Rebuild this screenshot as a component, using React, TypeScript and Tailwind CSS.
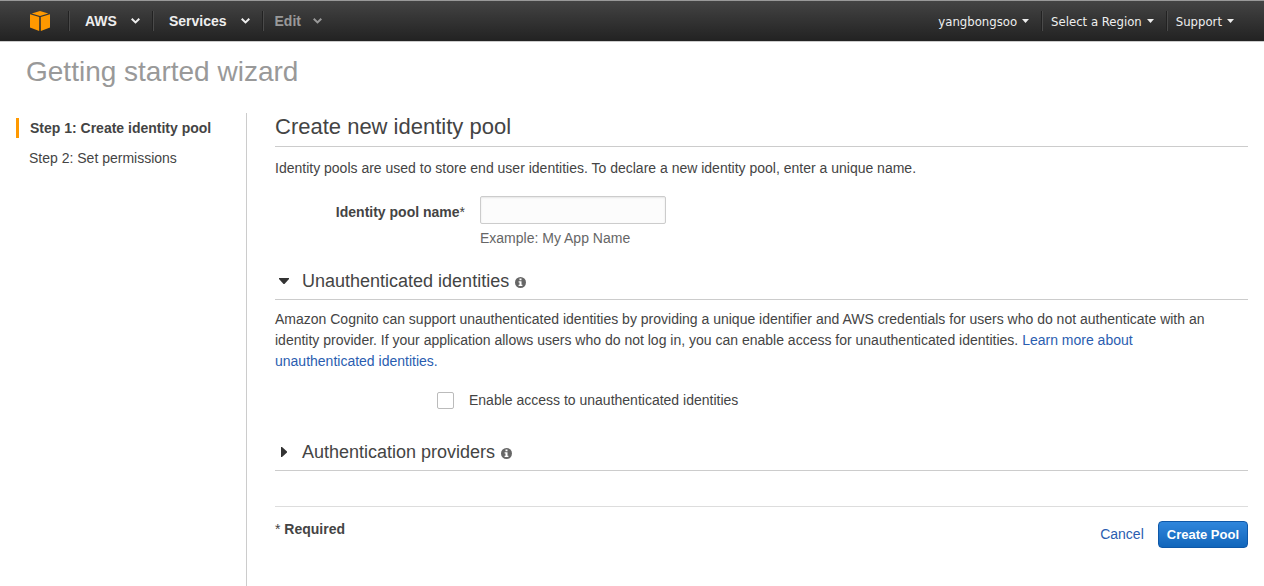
import { useState, type ReactNode } from 'react';

function Cube() {
  return (
    <svg viewBox="0 0 20 20" className="h-5 w-5" fill="#ff9900" aria-hidden="true">
      <path d="M10 0 18.3 2.4 10 5 1.7 2.4Z" />
      <path d="M0 3.3 9.2 5.9V20L0 16.6Z" />
      <path d="M20 3.3 10.8 5.9V20L20 16.6Z" />
    </svg>
  );
}

function Chevron() {
  return (
    <svg viewBox="0 0 9 6" className="h-1.5 w-[9px]" fill="none" stroke="currentColor" strokeWidth="2" aria-hidden="true">
      <path d="M0.7 0.8 4.5 4.4 8.3 0.8" />
    </svg>
  );
}

function Caret() {
  return (
    <svg viewBox="0 0 7 4" className="h-1 w-[7px]" fill="currentColor" aria-hidden="true">
      <path d="M0 0H7L3.5 4Z" />
    </svg>
  );
}

function InfoIcon() {
  return (
    <svg viewBox="0 0 11 11" className="mt-0.5 h-[11px] w-[11px]" aria-hidden="true">
      <circle cx="5.5" cy="5.5" r="5.5" fill="#666" />
      <path d="M4.5 1.5H6.5V3.2H4.5ZM3.6 4.2H6.5V7.8H7.4V9H3.6V7.8H4.5V5.4H3.6Z" fill="#fff" />
    </svg>
  );
}

function Divider() {
  return <span className="h-5 w-0.5 border-l border-l-[#222] border-r border-r-[#4a4a4a]" />;
}

function Section({ title, defaultOpen = false, children }: { title: string; defaultOpen?: boolean; children?: ReactNode }) {
  const [open, setOpen] = useState(defaultOpen);
  return (
    <section>
      <h3 className="border-b border-[#ccc] pb-1.5 text-lg leading-6">
        <button type="button" aria-expanded={open} onClick={() => setOpen(!open)} className="flex items-center">
          <span className="flex w-[27px] pl-1">
            <svg viewBox="0 0 10 10" className="h-2.5 w-2.5" fill="#333" aria-hidden="true">
              <path d={open ? 'M0 2H10V3L5.5 8H4.5L0 3Z' : 'M2 0H3L8 4.5V5.5L3 10H2Z'} />
            </svg>
          </span>
          <span className="pr-1.5">{title}</span>
          <InfoIcon />
        </button>
      </h3>
      {open && children}
    </section>
  );
}

export default function App() {
  return (
    <div className="flex min-h-screen flex-col bg-white font-['Liberation_Sans',Arial,sans-serif] text-sm leading-[21px] text-[#444]">
      <header className="flex h-[42px] items-center justify-between border-t border-b border-t-[#999] border-b-[#ccc] bg-linear-to-b from-[#444] to-[#222] px-[30px] text-[#eee] [text-shadow:0_1px_0_#000]">
        <nav className="flex items-center text-sm font-bold">
          <a href="#home" aria-label="Home" className="pr-[18px]"><Cube /></a>
          <Divider />
          <button type="button" className="flex items-center gap-3.5 pr-3 pl-[15px]">AWS <Chevron /></button>
          <Divider />
          <button type="button" className="flex items-center gap-3.5 pr-3 pl-[15px]">Services <Chevron /></button>
          <Divider />
          <button type="button" className="flex items-center gap-3 pl-[11px] text-[#999]">Edit <Chevron /></button>
        </nav>
        <nav className="flex items-center font-['DejaVu_Sans_Condensed',Tahoma,sans-serif] text-[13px]">
          <button type="button" className="flex items-center gap-[5px] pr-3">yangbongsoo <Caret /></button>
          <Divider />
          <button type="button" className="flex items-center gap-[5px] pr-3 pl-2">Select a Region <Caret /></button>
          <Divider />
          <button type="button" className="flex items-center gap-[5px] pl-2">Support <Caret /></button>
        </nav>
      </header>

      <h1 className="px-[26px] pt-3 pb-[23px] text-[28px] leading-9 text-[#999]">Getting started wizard</h1>

      <div className="flex flex-1 px-4">
        <aside className="w-[230px] shrink-0 pt-[5px]">
          <ol className="flex flex-col gap-2.5 leading-5">
            <li aria-current="step" className="border-l-[3px] border-[#ff9900] pl-[11px] font-bold">Step 1: Create identity pool</li>
            <li className="pl-[13px]">Step 2: Set permissions</li>
          </ol>
        </aside>

        <main className="min-w-0 flex-1 border-l border-[#ccc] pl-7">
          <h2 className="border-b border-[#ccc] pb-[5px] text-[22px] leading-7">Create new identity pool</h2>
          <p className="pt-[11px]">Identity pools are used to store end user identities. To declare a new identity pool, enter a unique name.</p>

          <form onSubmit={(e) => e.preventDefault()}>
            <div className="flex pt-[17px]">
              <label htmlFor="pool-name" className="w-[190px] pt-1.5 text-right font-bold">
                Identity pool name<span className="font-normal">*</span>
              </label>
              <div className="pl-[15px]">
                <input id="pool-name" type="text" className="block h-7 w-[186px] rounded-xs border border-[#ccc] bg-[#fcfcfc] px-2 shadow-[inset_0_1px_2px_#e5e5e5]" />
                <p className="pt-1 text-[#666]">Example: My App Name</p>
              </div>
            </div>

            <div className="pt-5">
              <Section title="Unauthenticated identities" defaultOpen>
                <p className="pt-[9px]">
                  Amazon Cognito can support unauthenticated identities by providing a unique identifier and AWS credentials for users who do not authenticate with an identity provider. If your application allows users who do not log in, you can enable access for unauthenticated identities.{' '}
                  <a href="#learn-more" className="text-[#2a5db0]">Learn more about <span className="whitespace-nowrap">unauthenticated identities.</span></a>
                </p>
                <label className="flex items-center gap-[15px] pt-[18px] pl-[162px]">
                  <input type="checkbox" className="h-[17px] w-[17px] appearance-none rounded-xs border border-[#bbb] bg-white checked:bg-[#2a5db0]" />
                  Enable access to unauthenticated identities
                </label>
              </Section>
            </div>
            <div className="pt-[29px]">
              <Section title="Authentication providers" />
            </div>

            <footer className="mt-[35px] flex items-start justify-between border-t border-[#ddd] pt-3">
              <p className="font-bold"><span className="font-normal">*</span> Required</p>
              <div className="flex items-center gap-3.5 pt-0.5">
                <a href="#cancel" className="text-[#2a5db0]">Cancel</a>
                <button type="submit" className="h-[27px] rounded-sm border border-[#0f58a8] bg-linear-to-b from-[#2f86dc] to-[#1166bb] px-2 text-[13px] font-bold leading-5 text-white">Create Pool</button>
              </div>
            </footer>
          </form>
        </main>
      </div>
    </div>
  );
}
